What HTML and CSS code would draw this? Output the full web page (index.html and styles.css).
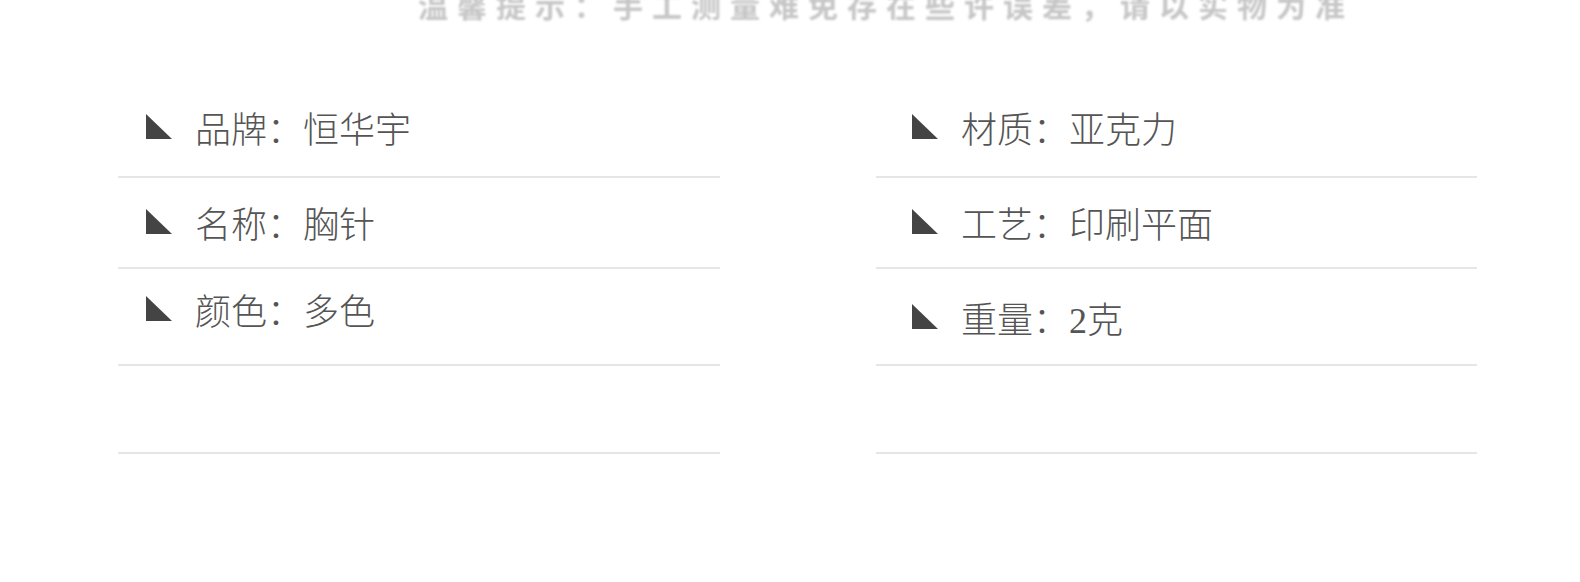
FILE: index.html
```html
<!DOCTYPE html>
<html lang="zh-CN">
<head>
    <meta charset="UTF-8">
    <meta name="viewport" content="width=device-width, initial-scale=1.0">
    <title>商品参数</title>
    <link rel="stylesheet" href="styles.css">
</head>
<body>

    <p class="note">温馨提示：手工测量难免存在些许误差，请以实物为准</p>

    <div class="specs">
        <ul class="col">
            <li class="item">
                <svg class="mark" viewBox="0 0 26 25"><polygon points="0,0 0,25 26,25"/></svg>
                <span>品牌：恒华宇</span>
            </li>
            <li class="item">
                <svg class="mark" viewBox="0 0 26 25"><polygon points="0,0 0,25 26,25"/></svg>
                <span>名称：胸针</span>
            </li>
            <li class="item">
                <svg class="mark" viewBox="0 0 26 25"><polygon points="0,0 0,25 26,25"/></svg>
                <span>颜色：多色</span>
            </li>
            <li class="item"></li>
        </ul>

        <ul class="col col-right">
            <li class="item">
                <svg class="mark" viewBox="0 0 26 25"><polygon points="0,0 0,25 26,25"/></svg>
                <span>材质：亚克力</span>
            </li>
            <li class="item">
                <svg class="mark" viewBox="0 0 26 25"><polygon points="0,0 0,25 26,25"/></svg>
                <span>工艺：印刷平面</span>
            </li>
            <li class="item item-low">
                <svg class="mark" viewBox="0 0 26 25"><polygon points="0,0 0,25 26,25"/></svg>
                <span>重量：2克</span>
            </li>
            <li class="item"></li>
        </ul>
    </div>

</body>
</html>
```

FILE: styles.css
```css
body {
    margin: 0;
    padding: 0;
    background-color: #fff;
    font-family: "Liberation Serif", "Noto Sans CJK SC", serif;
    overflow: hidden;
}

.note {
    margin: -11px 0 0 418px;
    font-family: "Noto Sans CJK SC", sans-serif;
    font-size: 30px;
    line-height: 30px;
    font-weight: bold;
    letter-spacing: 9px;
    color: #c6c6c6;
    white-space: nowrap;
    filter: blur(0.8px);
}

.specs {
    display: grid;
    grid-template-columns: 602px 601px;
    column-gap: 156px;
    margin: 61px 0 0 118px;
}

.col {
    list-style: none;
    margin: 0;
    padding: 0;
}

.item {
    display: flex;
    align-items: flex-start;
    box-sizing: border-box;
    padding-left: 28px;
    border-bottom: 2px solid #e6e6e6;
    font-size: 36px;
    line-height: 36px;
    font-weight: 300;
    color: #555;
}

.col-right .item {
    padding-left: 36px;
}

.item:nth-child(1) {
    height: 98px;
    padding-top: 33px;
}

.item:nth-child(2) {
    height: 91px;
    padding-top: 30px;
}

.item:nth-child(3) {
    height: 97px;
    padding-top: 26px;
}

.item:nth-child(3).item-low {
    padding-top: 34px;
}

.item:nth-child(4) {
    height: 88px;
}

.mark {
    width: 26px;
    height: 25px;
    margin-top: 1px;
    margin-right: 23px;
    flex-shrink: 0;
    fill: #444;
}
```
